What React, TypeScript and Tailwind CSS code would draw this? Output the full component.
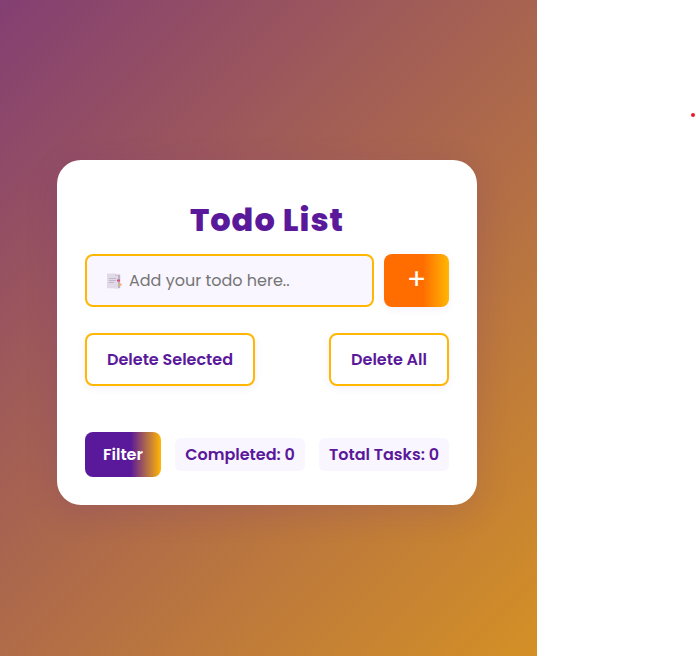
import React from "react";

function NoteIcon() {
  return (
    <svg className="h-4 w-4 shrink-0" viewBox="0 0 16 16" aria-hidden="true">
      <path d="M8 1.6h6.2v13.6H8z" fill="#bcb2c3" />
      <path d="M1 0.4h8l3 2.6V15.2H1z" fill="#e1d8e8" />
      <path d="M9 0.4V3h3z" fill="#d3c9da" />
      <path d="M3 5.5h7M3 7.5h7M3 9.5h5" stroke="#bdb2c7" strokeWidth="0.9" />
      <path d="M11 6.5h3v2h-3z" fill="#dc4a78" />
      <path d="M13.2 10.6h2.4v2h-2.4z" fill="#ecb653" />
    </svg>
  );
}

export default function App() {
  return (
    <div className="flex h-[656px] w-[696px] overflow-hidden bg-white font-[Poppins,Inter,sans-serif] text-base text-[#5a189a]">
      <main className="w-[537px] shrink-0 overflow-hidden bg-[linear-gradient(135deg,#843f73,#d49025)] pt-[160px] pl-[57px]">
        <section className="flex h-[345px] w-[420px] flex-col rounded-[24px] bg-white px-7 pt-10 shadow-[0_8px_32px_rgba(90,24,154,0.15)]">
          <h1 className="h-[54px] text-center text-[32px] leading-[40px] font-extrabold tracking-[1px]">Todo List</h1>
          <form className="flex gap-2.5" onSubmit={(e) => e.preventDefault()}>
            <label className="flex h-[53px] w-[289px] items-center gap-[7px] rounded-lg border-2 border-[#ffb703] bg-[#f9f6ff] pl-[19px]">
              <NoteIcon />
              <input
                className="w-[220px] bg-transparent text-base outline-none placeholder:text-[#757575]"
                placeholder="Add your todo here.."
              />
            </label>
            <button className="flex h-[53px] w-[65px] items-center justify-center rounded-lg bg-[linear-gradient(90deg,#ff6d00_60%,#ffb703_100%)] pb-0.5 text-[28.8px] leading-none text-white shadow-[0_2px_8px_rgba(90,24,154,0.07)]">+</button>
          </form>
          <div className="mt-[26px] flex justify-between">
            <button className="h-[53px] w-[170px] rounded-lg border-2 border-[#ffb703] bg-white text-base font-semibold whitespace-nowrap shadow-[0_2px_8px_rgba(90,24,154,0.07)]">Delete Selected</button>
            <button className="h-[53px] w-[120px] rounded-lg border-2 border-[#ffb703] bg-white text-base font-semibold whitespace-nowrap shadow-[0_2px_8px_rgba(90,24,154,0.07)]">Delete All</button>
          </div>
          <div className="mt-[46px] flex items-center justify-between font-semibold">
            <button className="h-[45px] w-[76px] rounded-lg bg-[linear-gradient(90deg,#5a189a_60%,#ffb703_100%)] text-base text-white">Filter</button>
            <span className="flex h-[33px] w-[130px] items-center justify-center rounded-md bg-[#f9f6ff] whitespace-nowrap">Completed: 0</span>
            <span className="flex h-[33px] w-[130px] items-center justify-center rounded-md bg-[#f9f6ff] whitespace-nowrap">Total Tasks: 0</span>
          </div>
        </section>
      </main>
      <aside className="flex flex-1 justify-end pt-[113px] pr-px">
        <span className="h-1 w-1 rounded-full bg-[#e81c24]" />
      </aside>
    </div>
  );
}
